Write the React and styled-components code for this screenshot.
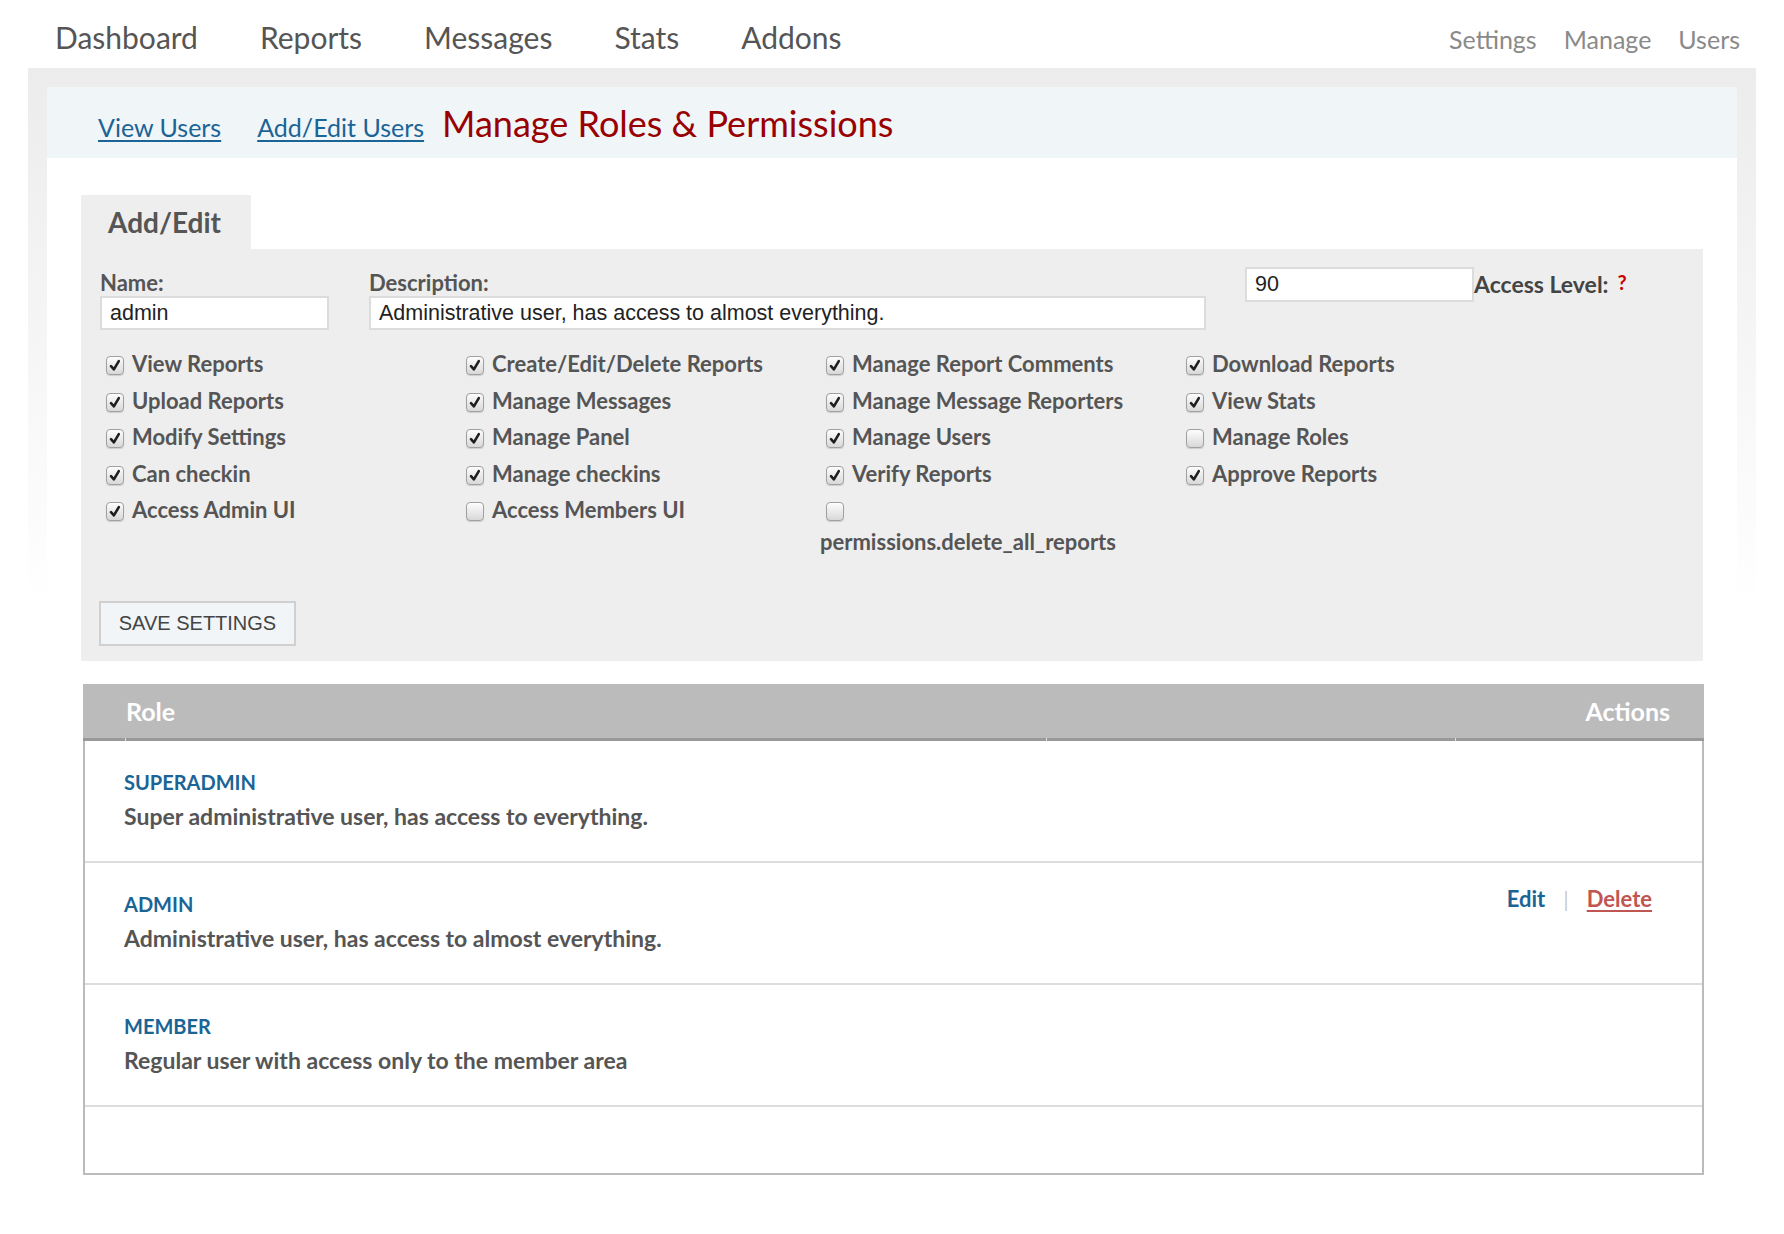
import React from "react"
import styled, { createGlobalStyle } from "styled-components"

const GlobalStyle = createGlobalStyle`
  * { box-sizing: border-box; }
  body {
    margin: 0;
    background: #fff;
    font-family: Lato, "Open Sans", sans-serif;
    color: #555;
  }
`

const TopNav = styled.header`
  height: 68px;
  display: flex;
  align-items: baseline;
  justify-content: space-between;
  padding: 19px 44px 0 55px;
`

const NavGroup = styled.nav`
  display: flex;
  align-items: baseline;
  gap: ${(p) => p.$gap}px;
`

const NavLink = styled.a`
  font-size: ${(p) => (p.$small ? 25 : 30)}px;
  line-height: 36px;
  color: ${(p) => (p.$small ? "#8a8a8a" : "#555")};
  text-decoration: none;
`

const Frame = styled.div`
  margin: 0 28px;
  padding: 19px 19px 0;
  background: linear-gradient(#ececec 0, #fff 540px);
`

const Inner = styled.div`
  background: #fff;
  padding-bottom: 60px;
`

const SubBar = styled.div`
  height: 71px;
  display: flex;
  align-items: baseline;
  padding: 14px 0 0 51px;
  background: #f0f5f8;
`

const SubLink = styled.a`
  font-size: 25px;
  color: #1a6496;
  text-decoration: underline;
  text-decoration-thickness: 2px;
  text-underline-offset: 3px;
  margin-right: ${(p) => p.$mr}px;
`

const Title = styled.h1`
  margin: 0;
  font-size: 36px;
  font-weight: 400;
  color: #990000;
`

const Content = styled.div`
  padding: 37px 34px 0;
`

const Tab = styled.div`
  width: 170px;
  height: 54px;
  display: flex;
  align-items: center;
  padding-left: 27px;
  background: #eee;
  font-size: 28px;
  font-weight: 700;
  color: #555;
`

const Panel = styled.form`
  background: #eee;
  padding: 18px 19px 15px;
`

const TopRow = styled.div`
  display: flex;
  align-items: flex-start;
`

const Field = styled.div`
  margin-top: 3px;
  margin-right: ${(p) => p.$mr}px;
`

const Label = styled.label`
  display: block;
  font-size: 22px;
  font-weight: 700;
  line-height: 26px;
  color: #555;
`

const TextInput = styled.input`
  display: block;
  width: ${(p) => p.$w}px;
  height: ${(p) => p.$h || 34}px;
  border: 2px solid #dcdcdc;
  background: #fff;
  padding: 0 8px;
  font: 21.5px "Liberation Sans", Arial, sans-serif;
  color: #222;
  outline: none;
`

const AccessLabel = styled.label`
  margin-top: 2px;
  font-size: 23px;
  font-weight: 700;
  line-height: 26px;
  color: #444;
`

const Help = styled.span`
  margin-left: 9px;
  font-size: 20px;
  color: #c00;
  vertical-align: 3px;
`

const PermGrid = styled.div`
  margin-top: 18px;
  display: grid;
  grid-template-columns: repeat(4, 360px);
  row-gap: 4.5px;
`

const Perm = styled.label`
  padding-left: 6px;
  font-size: 22px;
  font-weight: 700;
  line-height: 32px;
  color: #555;
`

const PermText = styled.span`
  display: ${(p) => (p.$stacked ? "block" : "inline")};
  margin-left: ${(p) => (p.$stacked ? -6 : 0)}px;
`

const Box = styled.span`
  display: inline-block;
  width: 18px;
  height: 19px;
  margin-right: 8px;
  vertical-align: -3px;
  border: 1px solid #a0a0a0;
  border-radius: 4px;
  background: linear-gradient(#fdfdfd, #d8d8d8);
  box-shadow: 0 1px 1px rgba(0, 0, 0, 0.14);
  svg {
    display: block;
  }
`

const SaveButton = styled.button`
  display: block;
  margin: 43px 0 0 -1px;
  width: 197px;
  height: 45px;
  border: 2px solid #d0d0d0;
  background: #f1f5f8;
  font: 20px "Liberation Sans", Arial, sans-serif;
  color: #444;
  text-transform: uppercase;
  cursor: pointer;
`

const Table = styled.div`
  margin: 23px -1px 0 2px;
`

const HeadRow = styled.div`
  display: grid;
  grid-template-columns: 42px 920px 408px 1fr;
  column-gap: 1px;
  background: linear-gradient(#bbb 0 calc(100% - 3px), #dedede 0);
`

const HeadCell = styled.div`
  height: 57px;
  display: flex;
  align-items: center;
  justify-content: ${(p) => (p.$right ? "flex-end" : "flex-start")};
  padding-right: ${(p) => (p.$right ? 34 : 0)}px;
  background: #bbb;
  border-bottom: 3px solid #999;
  font-size: 25px;
  font-weight: 700;
  color: #fff;
`

const Body = styled.div`
  border: 2px solid #bbb;
  border-top: none;
`

const Row = styled.div`
  height: ${(p) => (p.$empty ? 66 : 122)}px;
  display: flex;
  justify-content: space-between;
  align-items: flex-start;
  padding: 28px 50px 0 39px;
  border-bottom: ${(p) => (p.$empty ? "none" : "2px solid #ddd")};
`

const RoleName = styled.a`
  display: block;
  font-size: 20px;
  font-weight: 700;
  line-height: 26px;
  color: #1a6496;
  text-decoration: none;
`

const RoleDesc = styled.div`
  margin-top: 8px;
  font-size: 23px;
  font-weight: 700;
  line-height: 26px;
  color: #555;
`

const Actions = styled.div`
  margin-top: -5px;
  font-size: 22px;
  font-weight: 700;
  line-height: 26px;
`

const ActionLink = styled.a`
  color: ${(p) => (p.$danger ? "#bf5652" : "#1a6496")};
  text-decoration: ${(p) => (p.$danger ? "underline" : "none")};
  text-decoration-thickness: 2px;
  text-underline-offset: 3px;
`

const Sep = styled.span`
  margin: 0 18px;
  font-weight: 400;
  color: #ccc;
`

const permissions = [
  ["View Reports", true],
  ["Create/Edit/Delete Reports", true],
  ["Manage Report Comments", true],
  ["Download Reports", true],
  ["Upload Reports", true],
  ["Manage Messages", true],
  ["Manage Message Reporters", true],
  ["View Stats", true],
  ["Modify Settings", true],
  ["Manage Panel", true],
  ["Manage Users", true],
  ["Manage Roles", false],
  ["Can checkin", true],
  ["Manage checkins", true],
  ["Verify Reports", true],
  ["Approve Reports", true],
  ["Access Admin UI", true],
  ["Access Members UI", false],
  ["permissions.delete_all_reports", false, true],
]

const roles = [
  { name: "SUPERADMIN", desc: "Super administrative user, has access to everything." },
  { name: "ADMIN", desc: "Administrative user, has access to almost everything.", actions: true },
  { name: "MEMBER", desc: "Regular user with access only to the member area" },
]

const Checkbox = ({ checked }) => (
  <Box>
    {checked && (
      <svg width="16" height="17" viewBox="0 0 16 17">
        <path d="M4 9.2 L6.9 12.4 L11.8 4.2" fill="none" stroke="#1e1e1e" strokeWidth="2.6" strokeLinecap="round" strokeLinejoin="round" />
      </svg>
    )}
  </Box>
)

const App = () => {
  return (
    <>
      <GlobalStyle />
      <TopNav>
        <NavGroup $gap={62}>
          <NavLink>Dashboard</NavLink>
          <NavLink>Reports</NavLink>
          <NavLink>Messages</NavLink>
          <NavLink>Stats</NavLink>
          <NavLink>Addons</NavLink>
        </NavGroup>
        <NavGroup $gap={27}>
          <NavLink $small>Settings</NavLink>
          <NavLink $small>Manage</NavLink>
          <NavLink $small>Users</NavLink>
        </NavGroup>
      </TopNav>
      <Frame>
        <Inner>
          <SubBar>
            <SubLink $mr={36}>View Users</SubLink>
            <SubLink $mr={18}>Add/Edit Users</SubLink>
            <Title>Manage Roles &amp; Permissions</Title>
          </SubBar>
          <Content>
            <Tab>Add/Edit</Tab>
            <Panel>
              <TopRow>
                <Field $mr={40}>
                  <Label>Name:</Label>
                  <TextInput $w={229} defaultValue="admin" />
                </Field>
                <Field $mr={39}>
                  <Label>Description:</Label>
                  <TextInput $w={837} defaultValue="Administrative user, has access to almost everything." />
                </Field>
                <TextInput $w={229} $h={35} defaultValue="90" />
                <AccessLabel>
                  Access Level:<Help>?</Help>
                </AccessLabel>
              </TopRow>
              <PermGrid>
                {permissions.map(([label, checked, stacked]) => (
                  <Perm key={label}>
                    <Checkbox checked={checked} />
                    <PermText $stacked={stacked}>{label}</PermText>
                  </Perm>
                ))}
              </PermGrid>
              <SaveButton type="button">Save Settings</SaveButton>
            </Panel>
            <Table>
              <HeadRow>
                <HeadCell />
                <HeadCell>Role</HeadCell>
                <HeadCell />
                <HeadCell $right>Actions</HeadCell>
              </HeadRow>
              <Body>
                {roles.map((r) => (
                  <Row key={r.name}>
                    <div>
                      <RoleName>{r.name}</RoleName>
                      <RoleDesc>{r.desc}</RoleDesc>
                    </div>
                    {r.actions && (
                      <Actions>
                        <ActionLink>Edit</ActionLink>
                        <Sep>|</Sep>
                        <ActionLink $danger>Delete</ActionLink>
                      </Actions>
                    )}
                  </Row>
                ))}
                <Row $empty />
              </Body>
            </Table>
          </Content>
        </Inner>
      </Frame>
    </>
  )
}

export default App
